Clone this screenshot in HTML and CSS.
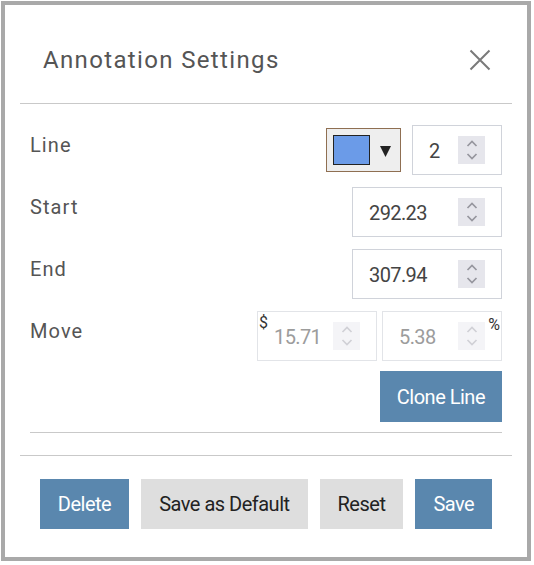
FILE: index.html
```html
<!DOCTYPE html>
<html lang="en">
<head>
<meta charset="utf-8">
<title>Annotation Settings</title>
<link rel="stylesheet" href="styles.css">
</head>
<body>
<div class="dialog">
  <div class="header">
    <h1 class="title">Annotation Settings</h1>
    <button class="close" aria-label="Close">
      <svg width="22" height="22" viewBox="0 0 22 22"><path d="M1.5 1.5 L20.5 20.5 M20.5 1.5 L1.5 20.5" stroke="#7a7a7a" stroke-width="2" fill="none"/></svg>
    </button>
  </div>
  <div class="body">
    <div class="rows">
      <div class="row">
        <span class="label">Line</span>
        <div class="controls">
          <button class="color-btn" aria-label="Line color">
            <span class="swatch"></span>
            <svg class="caret" width="11" height="11" viewBox="0 0 11 11"><polygon points="0,0 11,0 5.5,11" fill="#222"/></svg>
          </button>
          <div class="num w90">
            <span class="val">2</span>
            <span class="spin"><svg width="12" height="20" viewBox="0 0 12 20"><path d="M1.5 6 L6 1.5 L10.5 6 M1.5 14 L6 18.5 L10.5 14" stroke="#96969e" stroke-width="1.7" fill="none"/></svg></span>
          </div>
        </div>
      </div>
      <div class="row">
        <span class="label">Start</span>
        <div class="controls">
          <div class="num w150">
            <span class="val">292.23</span>
            <span class="spin"><svg width="12" height="20" viewBox="0 0 12 20"><path d="M1.5 6 L6 1.5 L10.5 6 M1.5 14 L6 18.5 L10.5 14" stroke="#96969e" stroke-width="1.7" fill="none"/></svg></span>
          </div>
        </div>
      </div>
      <div class="row">
        <span class="label">End</span>
        <div class="controls">
          <div class="num w150">
            <span class="val">307.94</span>
            <span class="spin"><svg width="12" height="20" viewBox="0 0 12 20"><path d="M1.5 6 L6 1.5 L10.5 6 M1.5 14 L6 18.5 L10.5 14" stroke="#96969e" stroke-width="1.7" fill="none"/></svg></span>
          </div>
        </div>
      </div>
      <div class="row">
        <span class="label">Move</span>
        <div class="controls move">
          <div class="num w120 disabled">
            <span class="unit unit-left">$</span>
            <span class="val">15.71</span>
            <span class="spin"><svg width="12" height="20" viewBox="0 0 12 20"><path d="M1.5 6 L6 1.5 L10.5 6 M1.5 14 L6 18.5 L10.5 14" stroke="#d0d0d6" stroke-width="1.7" fill="none"/></svg></span>
          </div>
          <div class="num w120 disabled">
            <span class="val">5.38</span>
            <span class="spin"><svg width="12" height="20" viewBox="0 0 12 20"><path d="M1.5 6 L6 1.5 L10.5 6 M1.5 14 L6 18.5 L10.5 14" stroke="#d0d0d6" stroke-width="1.7" fill="none"/></svg></span>
            <span class="unit unit-right">%</span>
          </div>
        </div>
      </div>
    </div>
    <div class="clone-wrap">
      <button class="btn primary clone">Clone Line</button>
    </div>
    <div class="inner-divider"></div>
  </div>
  <div class="footer">
    <button class="btn primary">Delete</button>
    <button class="btn secondary">Save as Default</button>
    <button class="btn secondary">Reset</button>
    <button class="btn primary">Save</button>
  </div>
</div>
</body>
</html>
```
FILE: styles.css
```css
* { box-sizing: border-box; }

html, body {
  margin: 0;
  padding: 0;
  background: #ffffff;
}

body {
  font-family: Roboto, "Noto Sans", sans-serif;
  padding: 1px;
}

.dialog {
  width: 530px;
  height: 560px;
  border: 4px solid #a9a9a9;
  background: #ffffff;
}

.header {
  margin: 0 15px;
  padding: 41px 21px 29px 23px;
  border-bottom: 1px solid #c9c9c9;
  display: flex;
  align-items: center;
  justify-content: space-between;
}

.title {
  margin: 0;
  font-size: 24px;
  line-height: 28px;
  font-weight: 400;
  letter-spacing: 1.35px;
  color: #555555;
}

.close {
  border: 0;
  background: none;
  padding: 0;
  width: 22px;
  height: 22px;
  display: flex;
  cursor: pointer;
}

.body {
  margin: 0 15px;
  padding: 21px 10px 0;
}

.rows {
  display: flex;
  flex-direction: column;
  gap: 12px;
}

.row {
  display: flex;
  justify-content: space-between;
  align-items: flex-start;
  height: 50px;
}

.label {
  margin-top: 8px;
  font-size: 20px;
  line-height: 24px;
  letter-spacing: 1.1px;
  color: #555555;
}

.controls {
  display: flex;
  align-items: center;
  gap: 11px;
  height: 50px;
}

.controls.move {
  gap: 5px;
}

.color-btn {
  width: 75px;
  height: 44px;
  border: 1px solid #8f6f52;
  background: #eeeeee;
  padding: 0 0 0 6px;
  display: flex;
  align-items: center;
  gap: 10px;
  cursor: pointer;
}

.swatch {
  display: block;
  width: 37px;
  height: 30px;
  background: #6b9be8;
  border: 1px solid #222222;
}

.caret {
  display: block;
  margin-top: 2px;
}

.num {
  position: relative;
  height: 50px;
  border: 1px solid #d0d3da;
  background: #ffffff;
  display: flex;
  align-items: center;
  justify-content: space-between;
  padding: 0 16px 0 16px;
}

.w90 { width: 90px; }
.w120 { width: 120px; }
.w150 { width: 150px; }

.val {
  font-size: 20px;
  line-height: 24px;
  letter-spacing: -0.6px;
  color: #444444;
  padding-top: 2px;
}

.spin {
  width: 27px;
  height: 28px;
  background: #e6e6ec;
  display: flex;
  align-items: center;
  justify-content: center;
}

.num.disabled {
  border-color: #e2e4e8;
}

.num.disabled .val {
  color: #9c9c9c;
}

.num.disabled .spin {
  background: #f4f4f7;
}

.unit {
  position: absolute;
  top: 2px;
  font-size: 16px;
  line-height: 18px;
  color: #333333;
}

.unit-left { left: 1px; }
.unit-right { right: 1px; top: 4px; }

.btn {
  height: 50px;
  border: 0;
  padding: 0 18px;
  font-family: Roboto, "Noto Sans", sans-serif;
  font-size: 20px;
  letter-spacing: -0.5px;
  cursor: pointer;
}

.btn.primary {
  background: #5a87ae;
  color: #ffffff;
}

.btn.secondary {
  background: #dedede;
  color: #222222;
}

.clone-wrap {
  display: flex;
  justify-content: flex-end;
  margin-top: 10px;
}

.btn.clone {
  height: 51px;
  padding: 0 17px;
}

.inner-divider {
  margin-top: 10px;
  height: 1px;
  background: #c9c9c9;
}

.footer {
  margin: 22px 15px 0;
  padding-top: 23px;
  border-top: 1px solid #c9c9c9;
  display: flex;
  justify-content: center;
  gap: 12px;
}
```
